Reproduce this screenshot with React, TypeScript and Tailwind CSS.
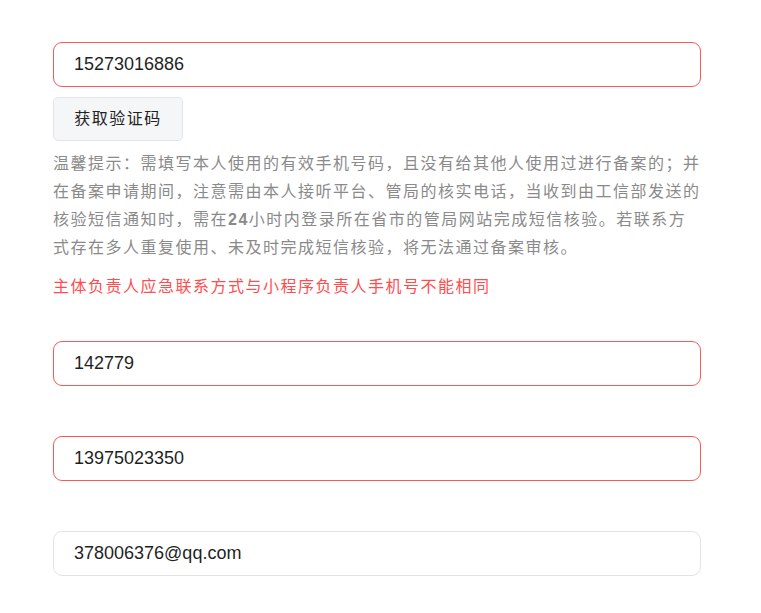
import React from 'react';

const cjk = '[font-family:"Liberation_Sans","Noto_Sans_CJK_SC",sans-serif]';

function Field({ value, error }: { value: string; error?: boolean }) {
  return (
    <div
      className={`h-[45px] w-full rounded-[9px] border bg-white flex items-center px-[20px] text-[18px] text-[#1f1f1f] ${
        error ? 'border-[#f85a5a]' : 'border-[#e3e3e3]'
      }`}
    >
      {value}
    </div>
  );
}

export default function App() {
  return (
    <div className={`min-h-[613px] bg-white pt-[42px] pl-[53px] ${cjk}`}>
      <div className="w-[648px] flex flex-col">
        <Field value="15273016886" error />
        <button className="mt-[10px] h-[44px] w-[130px] rounded-[5px] border border-[#e2e4e8] bg-[#f5f6f8] text-[16px] tracking-[1.5px] text-[#222]">
          获取验证码
        </button>
        <p className="mt-[9px] text-[16px] leading-[28px] tracking-[1.5px] text-[#8a8a8a]">
          温馨提示：需填写本人使用的有效手机号码，且没有给其他人使用过进行备案的；并在备案申请期间，注意需由本人接听平台、管局的核实电话，当收到由工信部发送的核验短信通知时，需在
          <b className="font-bold">24</b>
          小时内登录所在省市的管局网站完成短信核验。若联系方式存在多人重复使用、未及时完成短信核验，将无法通过备案审核。
        </p>
        <p className="mt-[11px] text-[16px] leading-[28px] tracking-[1.5px] text-[#ff4d4f]">
          主体负责人应急联系方式与小程序负责人手机号不能相同
        </p>
        <div className="mt-[40px] flex flex-col gap-[50px]">
          <Field value="142779" error />
          <Field value="13975023350" error />
          <Field value="378006376@qq.com" />
        </div>
      </div>
    </div>
  );
}
